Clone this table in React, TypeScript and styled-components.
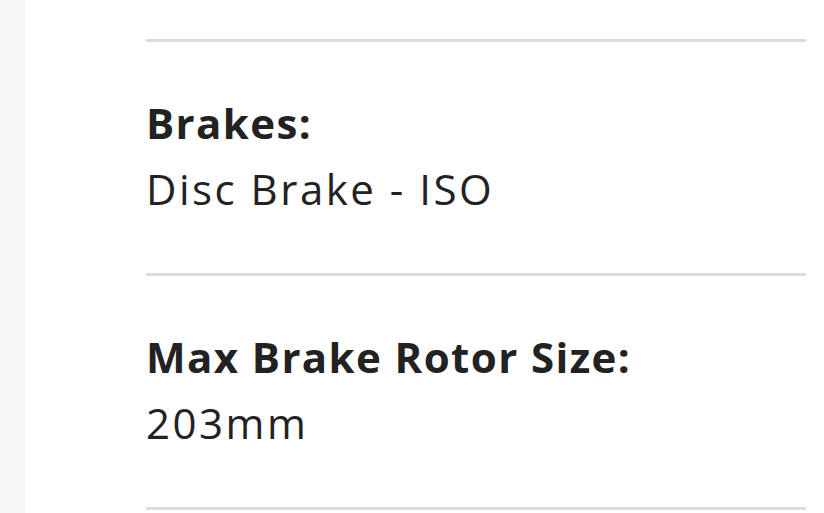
import styled, { createGlobalStyle } from "styled-components";

const GlobalStyle = createGlobalStyle`
  html, body {
    margin: 0;
    padding: 0;
    background: #fff;
  }
  body {
    font-family: "Open Sans", "Liberation Sans", sans-serif;
    color: #222;
  }
`;

const specs = [
  { label: "Brakes:", value: "Disc Brake - ISO" },
  { label: "Max Brake Rotor Size:", value: "203mm" },
];

const App = () => {
  return (
    <>
      <GlobalStyle />
      <Page>
        <SideStrip />
        <Content>
          <SpecList>
            {specs.map(({ label, value }) => (
              <SpecRow key={label}>
                <Label>{label}</Label>
                <Value>{value}</Value>
              </SpecRow>
            ))}
            <SpecRow $empty />
          </SpecList>
        </Content>
      </Page>
    </>
  );
};

export default App;

const Page = styled.div`
  display: flex;
  height: 513px;
  overflow: hidden;
`;

const SideStrip = styled.aside`
  width: 26px;
  flex-shrink: 0;
  background-color: #f7f7f7;
`;

const Content = styled.main`
  flex: 1;
  padding: 39px 18px 0 120px;
`;

const SpecList = styled.ul`
  list-style: none;
  margin: 0;
  padding: 0;
`;

const SpecRow = styled.li<{ $empty?: boolean }>`
  border-top: 3px solid #dcdcdc;
  padding: ${({ $empty }) => ($empty ? "0" : "48px 0 51px")};
`;

const Label = styled.div`
  font-size: 42px;
  line-height: 66px;
  font-weight: 700;
  letter-spacing: 1.4px;
  color: #222;
`;

const Value = styled.div`
  font-size: 42px;
  line-height: 66px;
  font-weight: 400;
  letter-spacing: 2.5px;
  color: #222;
`;
